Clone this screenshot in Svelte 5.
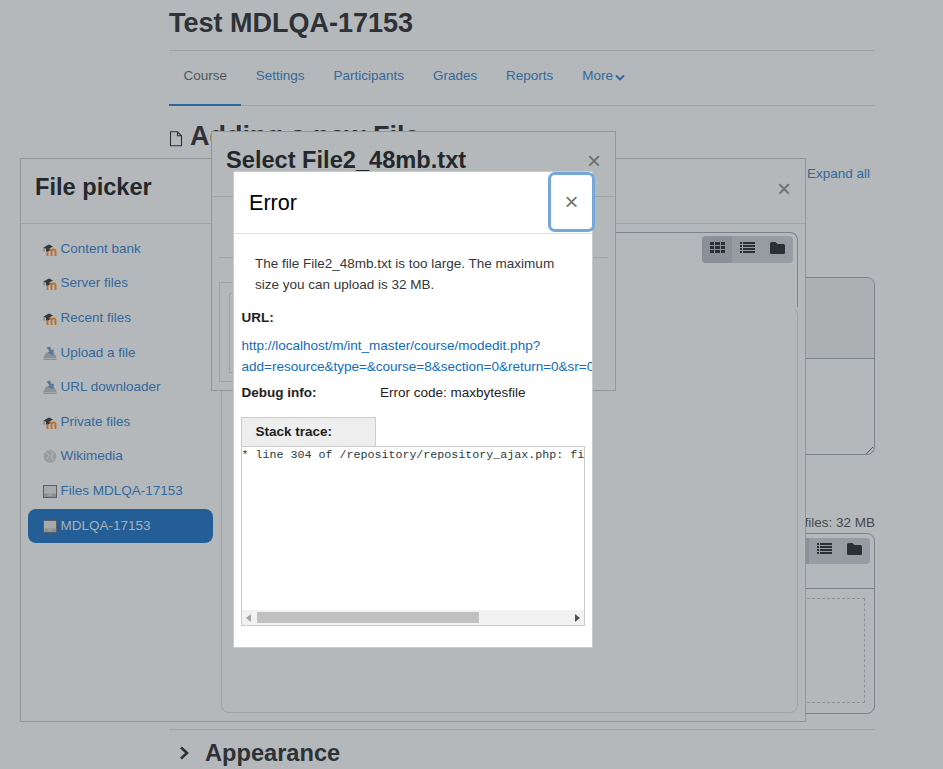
<script>
  const tabs = ['Settings', 'Participants', 'Grades', 'Reports'];
  const repos = [
    { name: 'Content bank', icon: 'moodle' },
    { name: 'Server files', icon: 'moodle' },
    { name: 'Recent files', icon: 'moodle' },
    { name: 'Upload a file', icon: 'upload' },
    { name: 'URL downloader', icon: 'upload' },
    { name: 'Private files', icon: 'moodle' },
    { name: 'Wikimedia', icon: 'wiki' },
    { name: 'Files MDLQA-17153', icon: 'drive' },
    { name: 'MDLQA-17153', icon: 'drive', active: true }
  ];
</script>

{#snippet viewIcons(activeGrid)}
  <div class="views">
    <span class="view" class:on={activeGrid}>
      <svg width="15" height="12" viewBox="0 0 15 12"><path d="M0 0h4v3H0zM5 0h5v3H5zM11 0h4v3h-4zM0 4h4v3H0zM5 4h5v3H5zM11 4h4v3h-4zM0 8h4v3H0zM5 8h5v3H5zM11 8h4v3h-4z"/></svg>
    </span>
    <span class="view">
      <svg width="15" height="12" viewBox="0 0 15 12"><path d="M0 0h2v2H0zM3 0h12v2H3zM0 3h2v2H0zM3 3h12v2H3zM0 6h2v2H0zM3 6h12v2H3zM0 9h2v2H0zM3 9h12v2H3z"/></svg>
    </span>
    <span class="view folder">
      <svg width="15" height="12" viewBox="0 0 15 12"><path d="M1.500 0h4l2 2h6A1.500 1.500 0 0 1 15 3.500v7a1.500 1.500 0 0 1-1.500 1.500h-12A1.500 1.500 0 0 1 0 10.500v-9A1.500 1.500 0 0 1 1.500 0z"/></svg>
    </span>
  </div>
{/snippet}

{#snippet repoIcon(kind)}
  {#if kind === 'moodle'}
    <svg class="ri" width="14" height="14" viewBox="0 0 14 14">
      <path d="M4.500 14V9.500a2 2 0 0 1 4 0V14M8.500 9.500a2 2 0 0 1 4 0V14" fill="none" stroke="#bd6f2c" stroke-width="1.900"/>
      <path d="M.5 5.500 6 2.500 10 4.500 4.500 7.500z" fill="#33363a"/>
      <path d="M3 7v2.500l3.500-.5V6.500z" fill="#33363a"/>
      <path d="M1 5.500V9.500" stroke="#55585b" stroke-width=".8"/>
    </svg>
  {:else if kind === 'upload'}
    <svg class="ri" width="14" height="14" viewBox="0 0 14 14">
      <path d="M3 6.500 0.500 11.500V14h13v-2.500L11 6.500z" fill="#8d9195"/>
      <path d="M1 12.500h12" stroke="#a5a8ab"/>
      <path d="M3.500 1.500 7 .5l1.500 3.500 2.500-.5L10 9.500 4.500 6.500l2-1z" fill="#5b7a97"/>
    </svg>
  {:else if kind === 'wiki'}
    <svg class="ri" width="14" height="14" viewBox="0 0 14 14">
      <circle cx="7" cy="7.500" r="6.500" fill="#999da0"/>
      <path d="M3 3 6 6 4 10M8 2l2 3-2 3 2 3" fill="none" stroke="#b4b7b9" stroke-width="1"/>
    </svg>
  {:else}
    <svg class="ri" width="14" height="14" viewBox="0 0 14 14">
      <rect x=".5" y="1.500" width="13" height="12" fill="#a6aaad" stroke="#5c6064"/>
      <rect x="1" y="9.500" width="12" height="3.500" fill="#8c9094"/>
      <path d="M5 11h4" stroke="#aaa"/>
    </svg>
  {/if}
{/snippet}

<div class="screen">
  <main class="page">
    <h1>Test MDLQA-17153</h1>
    <nav class="tabs">
      <span class="tab current">Course</span>
      {#each tabs as t}<span class="tab">{t}</span>{/each}
      <span class="tab">More<svg class="caret" width="10" height="7" viewBox="0 0 10 7"><path d="M1 1.500 5 5.500 9 1.500" fill="none" stroke="#2f659b" stroke-width="1.800"/></svg></span>
    </nav>
    <div class="heading">
      <svg width="14" height="16" viewBox="0 0 14 16"><path d="M1.500.8h7l4 4v10h-11zM8.500.8v4h4" fill="none" stroke="#2e3236" stroke-width="1.100"/></svg>
      <h2>Adding a new File</h2>
    </div>
    <div class="expand"><span>Expand all</span></div>
    <div class="editor">
      <div class="editor-top"></div>
      <div class="editor-text">
        <svg class="grip" width="9" height="9" viewBox="0 0 9 9"><path d="M1 8 8 1M5 8 8 5" stroke="#555" stroke-width="1"/></svg>
      </div>
    </div>
    <div class="limit">Maximum size for new files: 32 MB</div>
    <div class="manager">
      <div class="manager-bar">{@render viewIcons(true)}</div>
      <div class="manager-body"><div class="drop"></div></div>
    </div>
    <div class="appearance">
      <svg width="12" height="16" viewBox="0 0 12 16"><path d="M3 2.500 9 8 3 13.500" fill="none" stroke="#2e3236" stroke-width="2.600"/></svg>
      <h3>Appearance</h3>
    </div>
  </main>

  <section class="picker">
    <header class="picker-head">
      <h4>File picker</h4>
      <span class="x">×</span>
    </header>
    <div class="picker-body">
      <ul class="repos">
        {#each repos as r}
          <li class:active={r.active}>{@render repoIcon(r.icon)}<span>{r.name}</span></li>
        {/each}
      </ul>
      <div class="files">
        <div class="files-top">{@render viewIcons(true)}</div>
        <div class="files-main"></div>
      </div>
    </div>
  </section>

  <section class="select">
    <header class="select-head">
      <h4>Select File2_48mb.txt</h4>
      <span class="x">×</span>
    </header>
    <div class="select-body">
      <div class="select-rule"></div>
      <div class="select-outer"><div class="select-inner"></div></div>
    </div>
  </section>

  <section class="error">
    <header class="error-head">
      <h5>Error</h5>
      <button class="close">×</button>
    </header>
    <div class="error-body">
      <p class="msg">The file File2_48mb.txt is too large. The maximum size you can upload is 32 MB.</p>
      <p class="label">URL:</p>
      <p class="url">http://localhost/m/int_master/course/modedit.php?<br>add=resource&amp;type=&amp;course=8&amp;section=0&amp;return=0&amp;sr=0</p>
      <div class="debug"><b>Debug info:</b><span>Error code: maxbytesfile</span></div>
      <div class="trace-tab">Stack trace:</div>
      <div class="trace">
        <pre>* line 304 of /repository/repository_ajax.php: file_exception thrown</pre>
        <div class="scroll">
          <svg width="5" height="8" viewBox="0 0 5 8"><path d="M5 0v8L0 4z" fill="#a3a3a3"/></svg>
          <div class="track"><div class="thumb"></div></div>
          <svg width="5" height="8" viewBox="0 0 5 8"><path d="M0 0v8l5-4z" fill="#505050"/></svg>
        </div>
      </div>
    </div>
  </section>
</div>

<style>
  :global(body) {
    margin: 0;
    background: #b4b8bb;
    overflow: hidden;
  }
  .screen {
    position: relative;
    width: 943px;
    height: 769px;
    overflow: hidden;
    font-family: "Liberation Sans", Arial, sans-serif;
    font-size: 13.5px;
    color: #2e3236;
  }
  h1, h2, h3, h4, h5, p, ul, pre { margin: 0; padding: 0; }

  .page {
    box-sizing: border-box;
    width: 706px;
    margin-left: 169px;
    height: 769px;
    display: flex;
    flex-direction: column;
  }
  h1 {
    font-size: 27px;
    font-weight: 700;
    line-height: 34px;
    padding-top: 6px;
    height: 44px;
    border-bottom: 1px solid #a0a4a7;
    flex: none;
  }
  .tabs {
    display: flex;
    height: 54px;
    border-bottom: 1px solid #a0a4a7;
    flex: none;
    color: #33689c;
  }
  .tab {
    padding: 17px 14.450px 0;
    line-height: 16px;
    box-sizing: border-box;
    height: 55px;
  }
  .tab.current {
    color: #50565c;
    border-bottom: 2px solid #2b66a0;
  }
  .caret { margin-left: 2px; vertical-align: -1px; }
  .heading {
    display: flex;
    align-items: center;
    gap: 7px;
    height: 60px;
    flex: none;
    box-sizing: border-box;
  }
  .heading svg { margin-top: 6px; }
  h2 { font-size: 27px; line-height: 34px; font-weight: 700; }
  .expand {
    text-align: right;
    padding-right: 5px;
    color: #33689c;
    height: 112px;
    flex: none;
    margin-top: -1px;
  }
  .expand span { display: block; line-height: 16px; margin-top: 1px; }
  .editor {
    height: 178px;
    box-sizing: border-box;
    border: 1px solid #7c838b;
    border-radius: 8px;
    flex: none;
    overflow: hidden;
  }
  .editor-top {
    height: 80px;
    background: #adb0b3;
    border-bottom: 1px solid #7c838b;
  }
  .editor-text { position: relative; height: 96px; }
  .grip { position: absolute; right: 0; bottom: 0; }
  .limit {
    flex: none;
    margin-top: 58px;
    height: 20px;
    line-height: 20px;
    text-align: right;
    color: #44494e;
  }
  .manager {
    flex: none;
    height: 181px;
    box-sizing: border-box;
    border: 1px solid #7c838b;
    border-radius: 8px;
  }
  .manager-bar {
    height: 50px;
    border-bottom: 1px solid #7c838b;
    display: flex;
    justify-content: flex-end;
    padding: 4px 4px 0 0;
    box-sizing: content-box;
  }
  .manager-body { padding: 9px; }
  .drop {
    height: 103px;
    border: 1px dashed #8f9396;
  }
  .manager .views { height: 26px; }
  .manager .view { padding-top: 5px; }
  .appearance {
    flex: none;
    margin-top: 15px;
    border-top: 1px solid #a0a4a7;
    display: flex;
    align-items: center;
    gap: 15px;
    padding: 6px 0 0 9px;
    height: 34px;
  }
  h3 { font-size: 23.625px; line-height: 29px; font-weight: 700; }

  .views {
    display: flex;
    width: 91px;
    height: 27px;
    background: #979ca3;
    border-radius: 4px;
    overflow: hidden;
    flex: none;
  }
  .view {
    width: 30px;
    display: flex;
    justify-content: center;
    padding-top: 6px;
    box-sizing: border-box;
  }
  .view.on { background: #8a9097; }
  .view svg { fill: #2b3038; }

  .x { font-size: 24px; line-height: 24px; color: #6c6f72; }

  .picker {
    position: absolute;
    left: 20px;
    top: 158px;
    width: 786px;
    height: 564px;
    box-sizing: border-box;
    border: 1px solid #93979a;
    background: #b4b8bb;
    display: flex;
    flex-direction: column;
  }
  .picker-head {
    height: 64px;
    flex: none;
    border-bottom: 1px solid #a0a4a7;
    display: flex;
    justify-content: space-between;
    align-items: center;
    padding: 0 14px;
  }
  .picker-head .x { margin-bottom: 4px; }
  h4 {
    font-size: 23.625px;
    line-height: 29px;
    font-weight: 700;
    color: #24282b;
    margin-bottom: 8px;
  }
  .picker-body { flex: 1; display: flex; min-height: 0; padding-top: 8px; }
  .repos {
    list-style: none;
    width: 185px;
    margin-left: 7px;
    flex: none;
    color: #33689c;
  }
  .repos li {
    height: 34.600px;
    display: flex;
    align-items: center;
    padding: 0 0 2px 15px;
    gap: 3.500px;
    box-sizing: border-box;
    border-radius: 8px;
  }
  .repos li.active { background: #235f96; color: #aab0b6; }
  .ri { flex: none; margin-top: 1px; }
  .files {
    margin-left: 8px;
    width: 577px;
    height: 481px;
    flex: none;
    display: flex;
    flex-direction: column;
  }
  .files-top {
    height: 75px;
    box-sizing: border-box;
    border-top: 1px solid #7c838b;
    border-right: 1px solid #7c838b;
    border-top-right-radius: 8px;
    display: flex;
    justify-content: flex-end;
    padding: 3px 4px 0 0;
    flex: none;
  }
  .files-main {
    flex: 1;
    border: 1px solid #a0a4a7;
    border-top-color: transparent;
    border-radius: 8px;
  }

  .select {
    position: absolute;
    left: 211px;
    top: 131px;
    width: 405px;
    height: 260px;
    box-sizing: border-box;
    border: 1px solid #93979a;
    background: #b4b8bb;
    display: flex;
    flex-direction: column;
  }
  .select-head {
    height: 64px;
    flex: none;
    border-bottom: 1px solid #a0a4a7;
    display: flex;
    justify-content: space-between;
    align-items: center;
    padding: 0 14px;
  }
  .select-head .x { margin-bottom: 6px; }
  .select-body { padding: 60px 7px 0 7px; }
  .select-rule { height: 1px; background: #a0a4a7; }
  .select-outer {
    margin-top: 24px;
    width: 300px;
    height: 100px;
    border: 1px solid #a0a4a7;
    border-right: 0;
    padding: 10px 0 0 9px;
    box-sizing: border-box;
  }
  .select-inner {
    height: 80px;
    border: 1px solid #a0a4a7;
    box-sizing: border-box;
    border-right: 0;
  }

  .error {
    position: absolute;
    left: 233px;
    top: 171px;
    width: 360px;
    height: 477px;
    box-sizing: border-box;
    background: #fff;
    border: 1px solid #c9cbcd;
    display: flex;
    flex-direction: column;
  }
  .error-head {
    height: 61px;
    flex: none;
    border-bottom: 1px solid #dee2e6;
    display: flex;
    justify-content: space-between;
    align-items: center;
    padding-left: 15px;
    position: relative;
  }
  h5 { font-size: 21.600px; line-height: 26px; font-weight: 400; color: #000; }
  .close {
    position: absolute;
    right: -3px;
    top: 0;
    width: 47px;
    height: 60px;
    box-sizing: border-box;
    background: #fff;
    border: 3px solid #75a8da;
    border-radius: 7px;
    color: #777;
    font: 400 24px/1 "Liberation Sans", Arial, sans-serif;
    padding: 0;
  }
  .error-body { flex: 1; padding: 19px 0 0 7.500px; overflow: hidden; min-height: 0; }
  .msg {
    width: 310px;
    padding-left: 13.500px;
    line-height: 21px;
    color: #33373b;
  }
  .label { margin-top: 12px; font-weight: 700; line-height: 21px; color: #1d2125; }
  .url {
    margin-top: 7px;
    line-height: 21px;
    color: #0f6cbf;
    white-space: nowrap;
  }
  .debug {
    display: flex;
    margin-top: 5px;
    line-height: 21px;
    color: #1d2125;
  }
  .debug b { width: 138.500px; flex: none; }
  .trace-tab {
    margin: 14px 0 0 -1px;
    width: 135px;
    height: 29px;
    box-sizing: border-box;
    background: #eee;
    border: 1px solid #ccc;
    border-bottom: 0;
    padding-left: 14px;
    line-height: 27px;
    font-weight: 700;
    color: #1d2125;
  }
  .trace {
    margin-left: -1px;
    width: 344px;
    height: 180px;
    box-sizing: border-box;
    border: 1px solid #ccc;
    display: flex;
    flex-direction: column;
    overflow: hidden;
  }
  pre {
    flex: 1;
    font: 11.670px/14px "Liberation Mono", monospace;
    padding-top: 1px;
    color: #2a3a45;
    overflow: hidden;
  }
  .scroll {
    height: 15px;
    flex: none;
    background: #f1f1f1;
    display: flex;
    align-items: center;
    padding: 0 4px;
    box-sizing: border-box;
  }
  .track { flex: 1; padding: 0 5px 0 6px; }
  .thumb { width: 222px; height: 11px; background: #c1c1c1; }
</style>
